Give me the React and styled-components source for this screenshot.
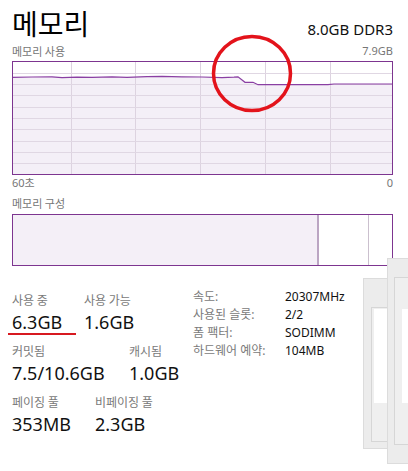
import React from "react";
import styled, { createGlobalStyle } from "styled-components";

const GlobalStyle = createGlobalStyle`
  html, body {
    margin: 0;
    padding: 0;
    background: #fff;
  }
  body {
    font-family: "Noto Sans", "Noto Sans CJK KR", sans-serif;
  }
`;

const PURPLE = "#7d3590";
const FILL = "#f4eff7";

const Page = styled.div`
  position: relative;
  width: 408px;
  height: 471px;
  overflow: hidden;
  padding: 0 15px 0 12px;
  box-sizing: border-box;
  background: #fff;
`;

const Header = styled.div`
  display: flex;
  justify-content: space-between;
  align-items: baseline;
  padding-top: 3px;
`;

const Title = styled.h1`
  margin: 0;
  font-family: "Noto Sans CJK KR", sans-serif;
  font-weight: 400;
  font-size: 28px;
  line-height: 40px;
  color: #000;
`;

const Spec = styled.div`
  font-size: 15px;
  line-height: 20px;
  color: #111;
`;

const Caption = styled.div`
  display: flex;
  justify-content: space-between;
  margin-top: ${(p) => p.$top || 0}px;
  font-size: 11px;
  line-height: 14px;
  color: #767676;
`;

const KoText = styled.span`
  font-family: "Noto Sans CJK KR", sans-serif;
`;

const ChartBox = styled.div`
  margin-top: 3px;
  svg {
    display: block;
  }
`;

const CompBar = styled.div`
  display: flex;
  margin-top: 4px;
  height: 52px;
  border: 1px solid ${PURPLE};
  box-sizing: border-box;
`;

const Segment = styled.div`
  width: ${(p) => p.$w}px;
  flex: ${(p) => (p.$w ? "none" : 1)};
  background: ${(p) => p.$bg || "#fff"};
  border-right: ${(p) => p.$line || "none"};
`;

const Stats = styled.div`
  display: flex;
  align-items: flex-start;
  margin-top: 26px;
`;

const Left = styled.div`
  width: 181px;
`;

const StatRow = styled.div`
  display: flex;
  margin-bottom: 9px;
`;

const Stat = styled.div`
  width: ${(p) => p.$w}px;
  flex: none;
`;

const Label = styled.div`
  font-family: "Noto Sans CJK KR", sans-serif;
  font-size: 12px;
  line-height: 16px;
  color: #7a7a7a;
`;

const Value = styled.div`
  position: relative;
  margin-top: 2px;
  font-size: 18px;
  line-height: 24px;
  color: #111;

  ${(p) =>
    p.$marked &&
    `
    &::after {
      content: "";
      position: absolute;
      left: -4px;
      top: 23px;
      width: 68px;
      height: 2px;
      background: #d71920;
    }
  `}
`;

const Info = styled.div`
  display: grid;
  grid-template-columns: 92px auto;
  align-content: start;
  margin-top: -4px;
  font-size: 12px;
  line-height: 18px;
`;

const InfoKey = styled.div`
  color: #7a7a7a;
`;

const InfoVal = styled.div`
  color: #111;
`;

const Circle = styled.svg`
  position: absolute;
  left: 211px;
  top: 34px;
`;

const Ghost = styled.div`
  position: absolute;
  left: ${(p) => p.$x}px;
  top: ${(p) => p.$y}px;
  width: ${(p) => p.$w}px;
  height: ${(p) => p.$h}px;
  padding: ${(p) => p.$pad};
  background: #ececec;
  border: 1px solid #dcdcdc;
  box-sizing: border-box;
`;

const GhostFrame = styled.div`
  height: ${(p) => p.$h}px;
  padding: ${(p) => p.$pad};
  background: #efefef;
  border: 1px solid #d6d6d6;
  border-right: none;
  box-sizing: border-box;
`;

const GhostPane = styled.div`
  height: 94px;
  background: #fff;
`;

const W = 381;
const H = 113;

const points = [
  [0, 16.3], [20, 16], [40, 15.8], [50, 16.6], [65, 16.2], [80, 16.4],
  [100, 15.8], [115, 16.3], [135, 15.6], [150, 15.4], [170, 15.9],
  [190, 16], [210, 16.6], [222, 16.2], [226, 15.8], [233, 21.3],
  [241, 21.3], [246, 23.7], [316, 23.7], [322, 23], [381, 23],
];

function UsageChart() {
  const line = points.map(([x, y]) => `${x},${y}`).join(" ");
  const area = `0,${H} ${line} ${W},${H}`;
  const vs = [0, 1, 2, 3, 4].map((i) => 58.5 + i * 64.75);
  const hs = [1, 2, 3, 4, 5, 6, 7, 8, 9].map((i) => 0.5 + (H / 10) * i);
  return (
    <svg width={W} height={H + 1} viewBox={`0 0 ${W} ${H + 1}`}>
      <polygon points={area} fill={FILL} />
      {vs.map((x) => (
        <line key={x} x1={Math.round(x) + 0.5} y1={0} x2={Math.round(x) + 0.5} y2={H} stroke="#ddd3e0" strokeWidth="1" />
      ))}
      {hs.map((y) => (
        <line key={y} x1={0} y1={Math.round(y) + 0.5} x2={W} y2={Math.round(y) + 0.5} stroke="#e0d7e3" strokeWidth="1" />
      ))}
      <polyline points={line} fill="none" stroke="#8a3fa3" strokeWidth="1.2" />
      <rect x="0.5" y="0.5" width={W - 1} height={H} fill="none" stroke={PURPLE} strokeWidth="1" />
    </svg>
  );
}

export default function App() {
  return (
    <Page>
      <GlobalStyle />
      <Header>
        <Title>메모리</Title>
        <Spec>8.0GB DDR3</Spec>
      </Header>
      <Caption $top={1}>
        <KoText>메모리 사용</KoText>
        <span>7.9GB</span>
      </Caption>
      <ChartBox>
        <UsageChart />
      </ChartBox>
      <Caption $top={1}>
        <span>60초</span>
        <span>0</span>
      </Caption>
      <Caption $top={6}>
        <KoText>메모리 구성</KoText>
      </Caption>
      <CompBar>
        <Segment $w={304} $bg={FILL} $line="2px solid #bba5c3" />
        <Segment $w={49} $line="1px solid #cbc0ce" />
        <Segment />
      </CompBar>

      <Stats>
        <Left>
          <StatRow>
            <Stat $w={72}>
              <Label>사용 중</Label>
              <Value $marked>6.3GB</Value>
            </Stat>
            <Stat $w={90}>
              <Label>사용 가능</Label>
              <Value>1.6GB</Value>
            </Stat>
          </StatRow>
          <StatRow>
            <Stat $w={117}>
              <Label>커밋됨</Label>
              <Value>7.5/10.6GB</Value>
            </Stat>
            <Stat $w={60}>
              <Label>캐시됨</Label>
              <Value>1.0GB</Value>
            </Stat>
          </StatRow>
          <StatRow>
            <Stat $w={83}>
              <Label>페이징 풀</Label>
              <Value>353MB</Value>
            </Stat>
            <Stat $w={90}>
              <Label>비페이징 풀</Label>
              <Value>2.3GB</Value>
            </Stat>
          </StatRow>
        </Left>
        <Info>
          <InfoKey>속도:</InfoKey>
          <InfoVal>20307MHz</InfoVal>
          <InfoKey>사용된 슬롯:</InfoKey>
          <InfoVal>2/2</InfoVal>
          <InfoKey>폼 팩터:</InfoKey>
          <InfoVal>SODIMM</InfoVal>
          <InfoKey>하드웨어 예약:</InfoKey>
          <InfoVal>104MB</InfoVal>
        </Info>
      </Stats>

      <Circle width="82" height="80" viewBox="0 0 82 80">
        <ellipse cx="41" cy="39.5" rx="38.5" ry="37" fill="none" stroke="#e3131b" strokeWidth="3.5" />
      </Circle>

      <Ghost $x={363} $y={278} $w={40} $h={171} $pad="28px 0 0 7px">
        <GhostFrame $h={135} $pad="1px 0 0 2px">
          <GhostPane />
        </GhostFrame>
      </Ghost>
      <Ghost $x={387} $y={258} $w={30} $h={206} $pad="18px 0 0 6px">
        <GhostFrame $h={168} $pad="31px 0 0 7px">
          <GhostPane />
        </GhostFrame>
      </Ghost>
    </Page>
  );
}
